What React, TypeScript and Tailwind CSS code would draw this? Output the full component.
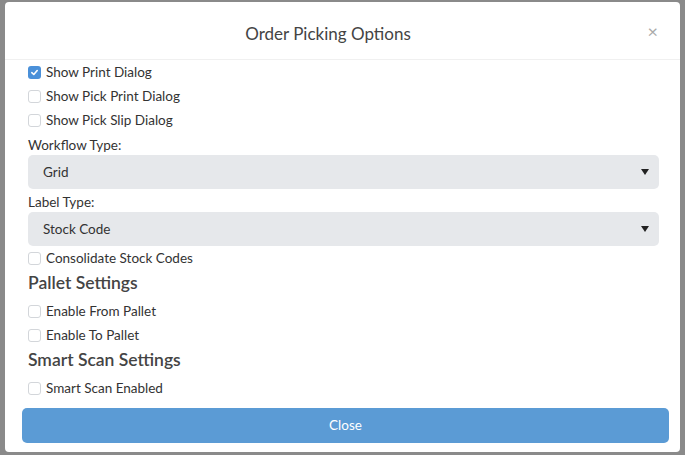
import React from "react";

function Check({ checked }: { checked?: boolean }) {
  return checked ? (
    <span className="flex h-[13px] w-[13px] items-center justify-center rounded-[3px] bg-[#4a90d9]">
      <svg width="9" height="9" viewBox="0 0 10 10">
        <path d="M2 5.2 L4.2 7.2 L8 2.8" fill="none" stroke="white" strokeWidth="1.8" strokeLinecap="round" strokeLinejoin="round" />
      </svg>
    </span>
  ) : (
    <span className="h-[13px] w-[13px] rounded-[3px] border border-[#d3d6da] bg-white" />
  );
}

function Row({ label, checked }: { label: string; checked?: boolean }) {
  return (
    <div className="flex h-[24px] items-center gap-[5px]">
      <Check checked={checked} />
      <span className="text-[13.5px] text-[#333]">{label}</span>
    </div>
  );
}

function Select({ value }: { value: string }) {
  return (
    <div className="flex h-[34px] items-center justify-between rounded-[5px] bg-[#e6e8eb] pl-[15px] pr-[10px]">
      <span className="text-[13.5px] text-[#333]">{value}</span>
      <svg width="8" height="6" viewBox="0 0 8 6">
        <path d="M0 0 H8 L4 6 Z" fill="#222" />
      </svg>
    </div>
  );
}

export default function App() {
  return (
    <div
      className="h-[455px] w-[685px] bg-[#8a8a8a] pl-[5px] pr-[5px] pt-[2px] pb-[3px]"
      style={{ fontFamily: "Lato, 'Open Sans', sans-serif" }}
    >
      <div className="flex h-full flex-col rounded-[4px] bg-white">
        <div className="relative flex h-[58px] items-center justify-center border-b border-[#f0f0f0] pr-[29px]">
          <span className="pt-[6px] text-[17px] text-[#444]">Order Picking Options</span>
          <span className="absolute right-[22px] top-[20px] text-[18px] leading-none text-[#aaa]">×</span>
        </div>
        <div className="flex flex-col pl-[23px] pr-[21px]">
          <Row label="Show Print Dialog" checked />
          <Row label="Show Pick Print Dialog" />
          <Row label="Show Pick Slip Dialog" />
          <div className="mt-[3px] text-[13.5px] leading-[20px] text-[#333]">Workflow Type:</div>
          <Select value="Grid" />
          <div className="mt-[3px] text-[13.5px] leading-[20px] text-[#333]">Label Type:</div>
          <Select value="Stock Code" />
          <Row label="Consolidate Stock Codes" />
          <div className="text-[17.5px] font-semibold leading-[26px] text-[#444]">Pallet Settings</div>
          <div className="mt-[3px]">
            <Row label="Enable From Pallet" />
          </div>
          <Row label="Enable To Pallet" />
          <div className="text-[17.5px] font-semibold leading-[26px] text-[#444]">Smart Scan Settings</div>
          <div className="mt-[3px]">
            <Row label="Smart Scan Enabled" />
          </div>
        </div>
        <div className="pl-[17px] pr-[11px] pt-[8px]">
          <div className="flex h-[35px] items-center justify-center rounded-[5px] bg-[#5b9bd5] text-[13.5px] text-white">
            Close
          </div>
        </div>
      </div>
    </div>
  );
}
